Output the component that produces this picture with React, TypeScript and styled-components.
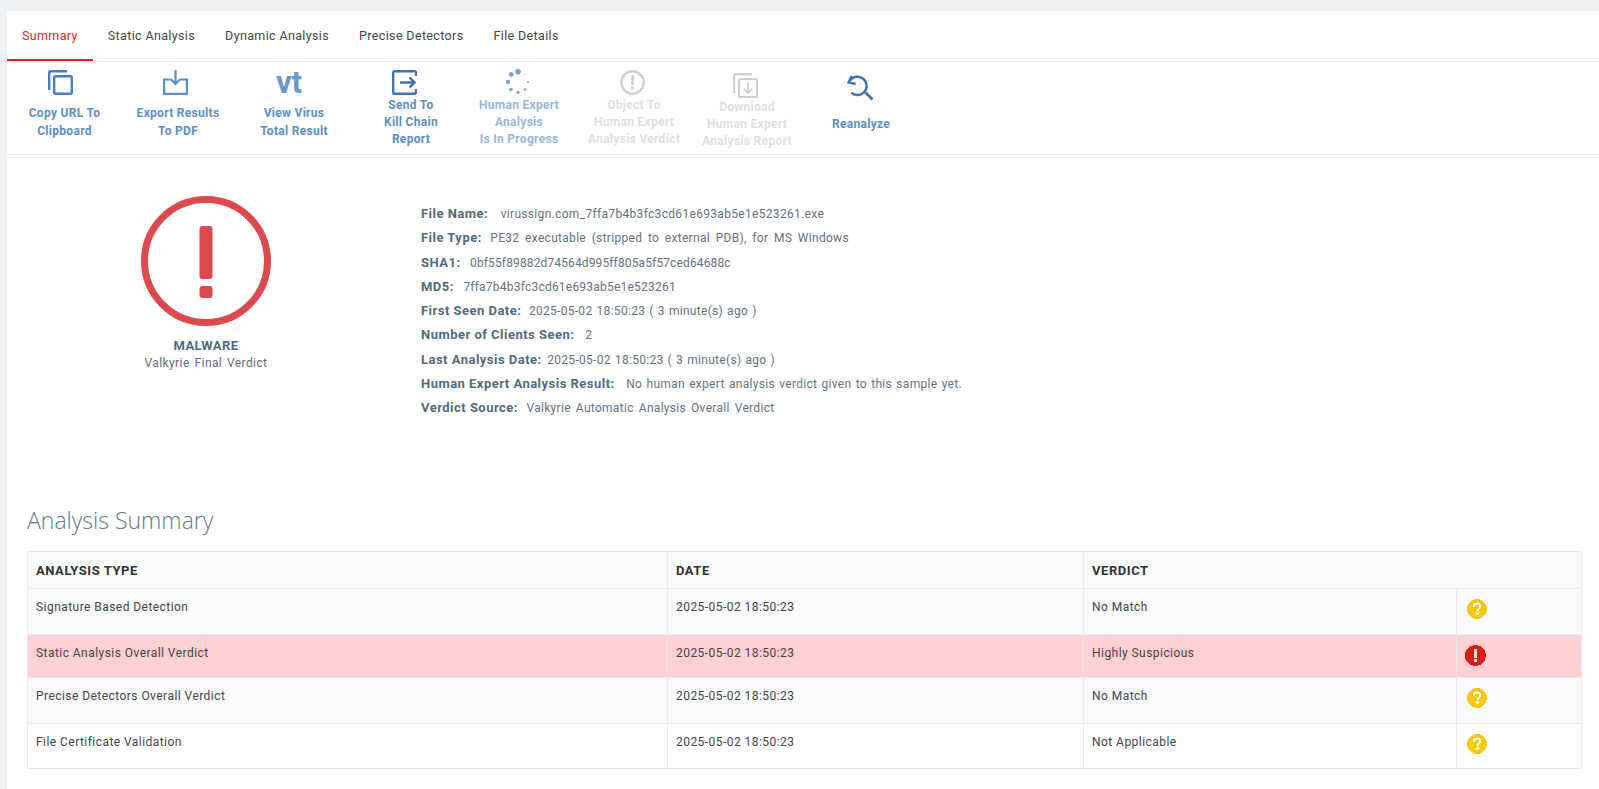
import React from "react";
import styled, { createGlobalStyle } from "styled-components";

const Global = createGlobalStyle`
  html, body { margin: 0; padding: 0; background: #eef1f6; }
  body { font-family: Roboto, "Liberation Sans", Arial, sans-serif; font-size: 12px; color: #333; overflow: hidden; }
`;

const Panel = styled.div`
  margin: 11px 0 0 7px;
  height: 778px;
  background: #fff;
  display: flex;
  flex-direction: column;
`;
const Tabs = styled.nav`
  display: flex;
  height: 50px;
  border-bottom: 1px solid #e7eaee;
  box-sizing: content-box;
`;
const Tab = styled.a<{ $active?: boolean }>`
  padding: 0 15px;
  line-height: 50px;
  height: 50px;
  box-sizing: border-box;
  font-size: 12.5px;
  letter-spacing: 0.36px;
  color: ${(p) => (p.$active ? "#e02222" : "#444")};
  border-bottom: 2px solid ${(p) => (p.$active ? "#e02222" : "transparent")};
`;
const Toolbar = styled.div`
  display: flex;
  height: 92px;
  border-bottom: 1px solid #e7eaee;
`;
const ActionButton = styled.div<{ $width: number; $top: number; $gap: number; $line: number; $shift: number; $dim?: "soft" | "off" }>`
  width: ${(p) => p.$width}px;
  padding-top: ${(p) => p.$top}px;
  display: flex;
  flex-direction: column;
  align-items: center;
  text-align: center;
  font-weight: 700;
  font-size: 12px;
  letter-spacing: 0.3px;
  line-height: ${(p) => p.$line}px;
  color: ${(p) => (p.$dim === "off" ? "#dcdfe2" : p.$dim === "soft" ? "#98b6da" : "#5c8ec8")};
  svg, strong { display: block; margin-bottom: ${(p) => p.$gap}px; margin-right: ${(p) => p.$shift}px; }
`;
const VtMark = styled.strong`
  font-family: Roboto, sans-serif;
  font-size: 31px;
  font-weight: 700;
  line-height: 25px;
  height: 25px;
  letter-spacing: 0;
  color: #6a98cd;
`;
const Overview = styled.section`
  display: flex;
  height: 350px;
  box-sizing: border-box;
  padding-top: 41px;
`;
const VerdictColumn = styled.div`
  width: 398px;
  display: flex;
  flex-direction: column;
  align-items: center;
  color: #5a6d7b;
  line-height: 17.5px;
  letter-spacing: 0.4px;
  word-spacing: 1.5px;
  svg { display: block; margin-bottom: 11px; }
`;
const VerdictName = styled.b`
  font-size: 13px;
  color: #526a7a;
`;
const InfoList = styled.div`
  padding: 6px 0 0 16px;
  color: #5f7280;
`;
const InfoRow = styled.div`
  line-height: 24.25px;
  white-space: nowrap;
`;
const InfoLabel = styled.b<{ $gap: number }>`
  font-size: 13px;
  letter-spacing: 0.48px;
  color: #526a7a;
  margin-right: ${(p) => p.$gap}px;
`;
const InfoValue = styled.span<{ $track: number; $word: number }>`
  letter-spacing: ${(p) => p.$track}px;
  word-spacing: ${(p) => p.$word}px;
`;
const SectionTitle = styled.h2`
  margin: 0 0 0 20px;
  font-family: "Open Sans", sans-serif;
  font-weight: 300;
  font-size: 23px;
  line-height: 30px;
  height: 46px;
  color: #64788a;
`;
const TableWrap = styled.div`
  margin: 0 17px 0 20px;
`;
const Table = styled.table`
  width: 100%;
  table-layout: fixed;
  border-collapse: collapse;
  font-size: 12px;
  letter-spacing: 0.45px;
`;
const Row = styled.tr<{ $tone?: "white" | "alert" }>`
  background: ${(p) => (p.$tone === "alert" ? "#ffd0d3" : p.$tone === "white" ? "#fff" : "#f9fafb")};
`;
const HeadCell = styled.th`
  height: 36px;
  padding: 0 8px;
  border: 1px solid #e7eaee;
  text-align: left;
  font-size: 13px;
  letter-spacing: 0.55px;
  font-weight: 700;
  color: #333;
  text-transform: uppercase;
`;
const Cell = styled.td<{ $height: number }>`
  height: ${(p) => p.$height}px;
  padding: 8px 8px 0;
  box-sizing: border-box;
  vertical-align: top;
  line-height: 20px;
  border: 1px solid #e7eaee;
  color: #444;
`;
const IconCell = styled(Cell)<{ $left: number }>`
  padding: 10px 0 0 ${(p) => p.$left}px;
  svg { display: block; }
`;

const Question = () => (
  <svg width="20" height="20" viewBox="0 0 20 20" shapeRendering="crispEdges">
    <circle cx="10" cy="10" r="10" fill="#f8c714" />
    <path d="M6.8 7.6c.1-2 1.5-3.2 3.4-3.2s3.2 1.1 3.2 2.8c0 2.300-2.900 2.400-2.900 4.800" fill="none" stroke="#fff" strokeWidth="1.900" />
    <rect x="9.300" y="13.200" width="2.200" height="2.300" fill="#fff" />
  </svg>
);
const Danger = () => (
  <svg width="21" height="21" viewBox="0 0 21 21" shapeRendering="crispEdges">
    <circle cx="10.500" cy="10.500" r="10.500" fill="#de1b17" />
    <rect x="8.800" y="4" width="3.400" height="8.500" fill="#fde" />
    <rect x="8.800" y="14" width="3.400" height="3" fill="#fde" />
  </svg>
);

const CopyIcon = () => (
  <svg width="25" height="25" viewBox="0 0 25 25" fill="none" stroke="#4a7dbf" strokeWidth="2.400">
    <path d="M1.200 20V2.800c0-.9.7-1.600 1.600-1.600H19" />
    <rect x="6.200" y="6.200" width="17.600" height="17.600" rx="1.500" />
  </svg>
);
const ExportIcon = () => (
  <svg width="25" height="25" viewBox="0 0 25 25" fill="none" stroke="#5c8ec8" strokeWidth="2.200">
    <path d="M7 9.500H1.100v14.400h22.800V9.500H18" />
    <path d="M12.500 0v13.500M7.500 9l5 5 5-5" />
  </svg>
);
const SendIcon = () => (
  <svg width="25" height="25" viewBox="0 0 25 25" fill="none" stroke="#3f70b8" strokeWidth="2.400">
    <path d="M24 6V2.800c0-.9-.7-1.600-1.600-1.600H2.800c-.9 0-1.600.7-1.600 1.600v19.400c0 .9.700 1.600 1.600 1.600h19.600c.9 0 1.600-.7 1.600-1.600V19" />
    <path d="M8 12.500h14M17.500 7.500l5 5-5 5" />
  </svg>
);
const SpinnerIcon = () => (
  <svg width="26" height="26" viewBox="0 0 26 26" fill="#7ea3d2">
    <circle cx="13" cy="2.800" r="2.800" />
    <circle cx="6.200" cy="5.400" r="2.400" />
    <circle cx="3" cy="13" r="2.200" />
    <circle cx="6" cy="20.500" r="1.800" />
    <circle cx="13" cy="23.300" r="1.600" />
    <circle cx="20.200" cy="20.500" r="1.300" />
    <circle cx="23" cy="13" r="1" />
    <circle cx="20" cy="5.600" r=".6" />
  </svg>
);
const AlertIcon = () => (
  <svg width="25" height="25" viewBox="0 0 25 25" fill="none" stroke="#c9d0d7" strokeWidth="2.400">
    <circle cx="12.500" cy="12.500" r="11.200" />
    <path d="M12.500 6v8" strokeWidth="2.600" strokeLinecap="round" />
    <path d="M12.500 17.600v1" strokeWidth="2.800" strokeLinecap="round" />
  </svg>
);
const DownloadIcon = () => (
  <svg width="25" height="25" viewBox="0 0 25 25" fill="none" stroke="#c9d0d7" strokeWidth="2.200">
    <path d="M1.100 20V2.800c0-.9.7-1.700 1.700-1.700H19" />
    <rect x="6" y="6" width="18" height="18" rx="1.500" />
    <path d="M15 9.500V20M11 16l4 4.200 4-4.200" strokeWidth="1.800" />
  </svg>
);
const ReanalyzeIcon = () => (
  <svg width="29" height="26" viewBox="0 0 29 26" fill="none" stroke="#3f70b8" strokeWidth="2.500">
    <path d="M5 5.500C7 3 10 1.600 13 1.800c5.200.3 9 4.500 8.700 9.600-.3 5-4.500 8.900-9.600 8.600-2.200-.1-4.200-1-5.600-2.400" />
    <path d="M6.800 1 3.600 7.400 10.600 9" />
    <path d="M20.500 17.500 27.500 24.500" strokeWidth="2.800" />
  </svg>
);

const actions = [
  { w: 115, t: 8, g: 9, l: 18, s: 8, icon: <CopyIcon />, lines: ["Copy URL To", "Clipboard"] },
  { w: 112, t: 8, g: 9, l: 18, s: 6, icon: <ExportIcon />, lines: ["Export Results", "To PDF"] },
  { w: 120, t: 8, g: 9, l: 18, s: 10, icon: <VtMark>vt</VtMark>, lines: ["View Virus", "Total Result"] },
  { w: 114, t: 8, g: 2, l: 17, s: 14, icon: <SendIcon />, lines: ["Send To", "Kill Chain", "Report"] },
  { w: 102, t: 7, g: 2, l: 17, s: 2, dim: "soft" as const, icon: <SpinnerIcon />, lines: ["Human Expert", "Analysis", "Is In Progress"] },
  { w: 128, t: 8, g: 2, l: 17, s: 4, dim: "off" as const, icon: <AlertIcon />, lines: ["Object To", "Human Expert", "Analysis Verdict"] },
  { w: 98, t: 11, g: 1, l: 17, s: 4, dim: "off" as const, icon: <DownloadIcon />, lines: ["Download", "Human Expert", "Analysis Report"] },
  { w: 130, t: 13, g: 14, l: 18, s: 4, icon: <ReanalyzeIcon />, lines: ["Reanalyze"] },
];

const info = [
  { k: "File Name:", g: 12.5, t: 0.32, w: 0, v: "virussign.com_7ffa7b4b3fc3cd61e693ab5e1e523261.exe" },
  { k: "File Type:", g: 8.5, t: 0.3, w: 2.4, v: "PE32 executable (stripped to external PDB), for MS Windows" },
  { k: "SHA1:", g: 9.5, t: 0.13, w: 0, v: "0bf55f89882d74564d995ff805a5f57ced64688c" },
  { k: "MD5:", g: 9.5, t: 0.22, w: 0, v: "7ffa7b4b3fc3cd61e693ab5e1e523261" },
  { k: "First Seen Date:", g: 7.5, t: 0.3, w: 0.8, v: "2025-05-02 18:50:23 ( 3 minute(s) ago )" },
  { k: "Number of Clients Seen:", g: 11, t: 0, w: 0, v: "2" },
  { k: "Last Analysis Date:", g: 5.5, t: 0.3, w: 0.8, v: "2025-05-02 18:50:23 ( 3 minute(s) ago )" },
  { k: "Human Expert Analysis Result:", g: 11.5, t: 0.3, w: 1, v: "No human expert analysis verdict given to this sample yet." },
  { k: "Verdict Source:", g: 8.5, t: 0.3, w: 1.75, v: "Valkyrie Automatic Analysis Overall Verdict" },
];

const rows = [
  { n: "Signature Based Detection", v: "No Match", h: 46, left: 10, icon: <Question /> },
  { n: "Static Analysis Overall Verdict", v: "Highly Suspicious", h: 43, left: 8, tone: "alert" as const, icon: <Danger /> },
  { n: "Precise Detectors Overall Verdict", v: "No Match", h: 46, left: 10, icon: <Question /> },
  { n: "File Certificate Validation", v: "Not Applicable", h: 45, left: 10, tone: "white" as const, icon: <Question /> },
];

export default function App() {
  return (
    <>
      <Global />
      <Panel>
        <Tabs>
          <Tab $active>Summary</Tab>
          <Tab>Static Analysis</Tab>
          <Tab>Dynamic Analysis</Tab>
          <Tab>Precise Detectors</Tab>
          <Tab>File Details</Tab>
        </Tabs>
        <Toolbar>
          {actions.map((a) => (
            <ActionButton key={a.lines.join()} $width={a.w} $top={a.t} $gap={a.g} $line={a.l} $shift={a.s} $dim={a.dim}>
              {a.icon}
              {a.lines.map((l) => (
                <span key={l}>{l}</span>
              ))}
            </ActionButton>
          ))}
        </Toolbar>
        <Overview>
          <VerdictColumn>
            <svg width="130" height="130" viewBox="0 0 130 130">
              <circle cx="65" cy="65" r="61.500" fill="none" stroke="#dc4a50" strokeWidth="7" />
              <rect x="58.500" y="30" width="13" height="53" rx="3" fill="#dc4a50" />
              <rect x="58.500" y="90" width="13" height="12" rx="3" fill="#dc4a50" />
            </svg>
            <VerdictName>MALWARE</VerdictName>
            <span>Valkyrie Final Verdict</span>
          </VerdictColumn>
          <InfoList>
            {info.map((i) => (
              <InfoRow key={i.k}>
                <InfoLabel $gap={i.g}>{i.k}</InfoLabel>
                <InfoValue $track={i.t} $word={i.w}>{i.v}</InfoValue>
              </InfoRow>
            ))}
          </InfoList>
        </Overview>
        <SectionTitle>Analysis Summary</SectionTitle>
        <TableWrap>
          <Table>
            <colgroup>
              <col style={{ width: 640 }} />
              <col style={{ width: 416 }} />
              <col style={{ width: 373 }} />
              <col />
            </colgroup>
            <thead>
              <Row>
                <HeadCell>Analysis Type</HeadCell>
                <HeadCell>Date</HeadCell>
                <HeadCell colSpan={2}>Verdict</HeadCell>
              </Row>
            </thead>
            <tbody>
              {rows.map((r) => (
                <Row key={r.n} $tone={r.tone}>
                  <Cell $height={r.h}>{r.n}</Cell>
                  <Cell $height={r.h}>2025-05-02 18:50:23</Cell>
                  <Cell $height={r.h}>{r.v}</Cell>
                  <IconCell $height={r.h} $left={r.left}>{r.icon}</IconCell>
                </Row>
              ))}
            </tbody>
          </Table>
        </TableWrap>
      </Panel>
    </>
  );
}
